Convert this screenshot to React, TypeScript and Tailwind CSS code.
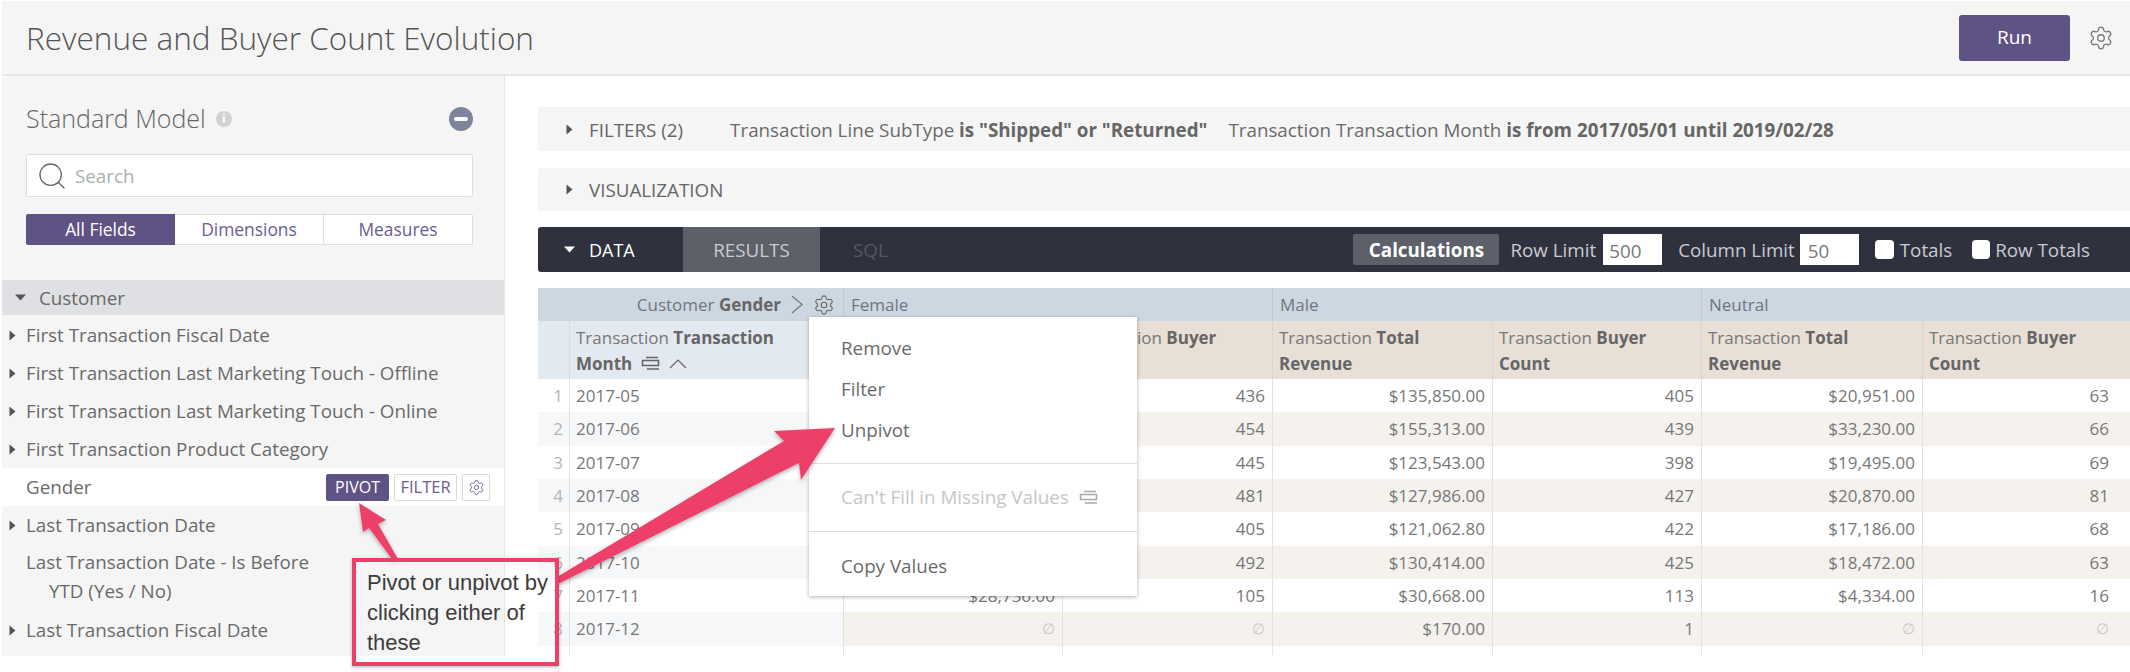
import { Settings, Search } from "lucide-react";

const font = "font-['Open_Sans',sans-serif]";

const fields = [
  "First Transaction Fiscal Date",
  "First Transaction Last Marketing Touch - Offline",
  "First Transaction Last Marketing Touch - Online",
  "First Transaction Product Category",
];

const rows = [
  ["2017-05", "", "436", "$135,850.00", "405", "$20,951.00", "63"],
  ["2017-06", "", "454", "$155,313.00", "439", "$33,230.00", "66"],
  ["2017-07", "", "445", "$123,543.00", "398", "$19,495.00", "69"],
  ["2017-08", "", "481", "$127,986.00", "427", "$20,870.00", "81"],
  ["2017-09", "", "405", "$121,062.80", "422", "$17,186.00", "68"],
  ["2017-10", "", "492", "$130,414.00", "425", "$18,472.00", "63"],
  ["2017-11", "$28,736.00", "105", "$30,668.00", "113", "$4,334.00", "16"],
  ["2017-12", "∅", "∅", "$170.00", "1", "∅", "∅"],
  ["", "", "", "", "", "", ""],
];

const cols = "grid grid-cols-[31px_274px_219px_210px_220px_209px_221px_208px]";

function TriRight() {
  return (
    <svg width="7" height="11" viewBox="0 0 7 11" className="shrink-0 text-[#555]">
      <path d="M0.5 0.5 L6.5 5.5 L0.5 10.5 Z" fill="currentColor" />
    </svg>
  );
}

function TriDown({ color = "#555" }: { color?: string }) {
  return (
    <svg width="11" height="7" viewBox="0 0 11 7" className="shrink-0">
      <path d="M0 0.5 L11 0.5 L5.5 6.5 Z" fill={color} />
    </svg>
  );
}

function FillIcon({ color = "#666" }: { color?: string }) {
  return (
    <svg width="20" height="16" viewBox="0 0 20 16" fill="none" stroke={color} strokeWidth="1.5" className="inline-block align-[-2px]">
      <path d="M5 1.5 H17" />
      <rect x="1.5" y="4.5" width="16" height="5" />
      <path d="M6 13 H18" />
    </svg>
  );
}

function FieldRow({ label, arrow }: { label: string; arrow?: boolean }) {
  return (
    <div className="h-[38px] flex items-center">
      <div className="w-[24px] pl-[7px]">{arrow && <TriRight />}</div>
      <span>{label}</span>
    </div>
  );
}

function ColHead({ a, b }: { a?: string; b?: string }) {
  const [first, second] = (b ?? "").split(" ");
  return (
    <div className="bg-[#e8dfd6] border-l border-[#dcd5cc] px-[6px] pt-[4px] leading-[26px] text-[#777]">
      {a} <b className="font-bold text-[#666]">{first}</b>
      <br />
      <b className="font-bold text-[#666]">{second}</b>
    </div>
  );
}

export default function App() {
  return (
    <div className={`${font} relative w-[2130px] h-[672px] overflow-hidden bg-white text-[#6a6a6a]`}>
      {/* top bar */}
      <header className="mt-px ml-[2px] h-[75px] bg-[#f5f5f5] border-b-2 border-[#e8e8e8] flex items-center pl-[24px] pr-[16px]">
        <h1 className="font-light text-[31.5px] text-[#555] flex-1">Revenue and Buyer Count Evolution</h1>
        <button className="w-[111px] h-[46px] rounded-[3px] bg-[#5f5285] text-white text-[19px]">Run</button>
        <Settings className="ml-[18px] w-[26px] h-[26px] text-[#777]" strokeWidth={1.2} />
      </header>

      <div className="flex">
        {/* field picker */}
        <aside className="ml-[2px] w-[503px] h-[580px] bg-[#f5f5f5] border-r border-[#e6e6e6] text-[18.8px]">
          <div className="pl-[24px] pr-[31px] pt-[26px]">
            <div className="flex items-center h-[34px]">
              <span className="font-light text-[25px] text-[#666]">Standard Model</span>
              <span className="ml-[10px] w-[16px] h-[16px] rounded-full bg-[#d2d2d2] text-white text-[12px] font-bold leading-[16px] text-center">i</span>
              <span className="ml-auto w-[24px] h-[24px] rounded-full bg-[#7d849b] flex items-center justify-center">
                <span className="w-[14px] h-[4px] bg-white rounded-sm" />
              </span>
            </div>
            <div className="mt-[18px] h-[43px] bg-white border border-[#dedede] rounded-[2px] flex items-center pl-[9px]">
              <Search className="w-[32px] h-[32px] text-[#666]" strokeWidth={1} />
              <span className="ml-[7px] pt-[2px] text-[#a9b0b0]">Search</span>
            </div>
            <div className="mt-[17px] h-[31px] grid grid-cols-3 text-[17.4px] text-[#6b5c94]">
              <div className="bg-[#5f5285] text-white flex items-center justify-center rounded-l-[2px]">All Fields</div>
              <div className="bg-white border-y border-r border-[#dedede] flex items-center justify-center">Dimensions</div>
              <div className="bg-white border-y border-r border-[#dedede] flex items-center justify-center rounded-r-[2px]">Measures</div>
            </div>
          </div>
          <div className="mt-[35px] h-[35px] bg-[#dfe0e3] flex items-center pl-[13px]">
            <TriDown />
            <span className="ml-[13px] pt-[2px]">Customer</span>
          </div>
          <div className="mt-px">
            {fields.map((f) => (
              <FieldRow key={f} label={f} arrow />
            ))}
            <div className="h-[38px] bg-white flex items-center pl-[24px] pr-[14px]">
              <span className="flex-1">Gender</span>
              <span className="w-[63px] h-[27px] rounded-[2px] bg-[#5f5285] text-white text-[16px] flex items-center justify-center">PIVOT</span>
              <span className="ml-[5px] w-[63px] h-[27px] rounded-[2px] bg-white border border-[#d8d8d8] text-[#6b5c94] text-[16.5px] flex items-center justify-center">FILTER</span>
              <span className="ml-[5px] w-[28px] h-[27px] rounded-[2px] bg-white border border-[#d8d8d8] flex items-center justify-center">
                <Settings className="w-[17px] h-[17px] text-[#6b5c94]" strokeWidth={1.3} />
              </span>
            </div>
            <FieldRow label="Last Transaction Date" arrow />
            <div className="h-[67px] pl-[24px] pt-[4px] leading-[29px]">
              <div>Last Transaction Date - Is Before</div>
              <div className="pl-[23px]">YTD (Yes / No)</div>
            </div>
            <FieldRow label="Last Transaction Fiscal Date" arrow />
          </div>
        </aside>

        {/* results area */}
        <main className="flex-1 min-w-0 pl-[33px] pt-[31px] text-[18.8px]">
          <div className="h-[44px] bg-[#f5f5f5] rounded-l-[3px] flex items-center pl-[28px] whitespace-nowrap">
            <TriRight />
            <span className="ml-[16px] pt-[2px] text-[#666]">FILTERS (2)</span>
            <span className="ml-[47px] pt-[2px]">
              Transaction Line SubType <b className="font-bold text-[#666]">is "Shipped" or "Returned"</b>
            </span>
            <span className="ml-[21px] pt-[2px]">
              Transaction Transaction Month <b className="font-bold text-[#666]">is from 2017/05/01 until 2019/02/28</b>
            </span>
          </div>
          <div className="mt-[17px] h-[43px] bg-[#f5f5f5] rounded-l-[3px] flex items-center pl-[28px]">
            <TriRight />
            <span className="ml-[16px] pt-[2px] text-[#666]">VISUALIZATION</span>
          </div>
          <div className="mt-[16px] h-[45px] bg-[#2f323e] rounded-l-[3px] flex items-center text-[#c9cbd1] whitespace-nowrap">
            <div className="w-[145px] flex items-center pl-[26px] text-white">
              <TriDown color="#fff" />
              <span className="ml-[14px] pt-[2px] text-[18px]">DATA</span>
            </div>
            <div className="w-[137px] h-full pt-[2px] bg-[#5d6069] flex items-center justify-center">RESULTS</div>
            <span className="ml-[33px] pt-[2px] text-[#54575f]">SQL</span>
            <div className="ml-auto flex items-center pr-[40px]">
              <span className="w-[146px] h-[31px] pt-[2px] rounded-[2px] bg-[#5d6069] text-white font-bold flex items-center justify-center">Calculations</span>
              <span className="ml-[11px] pt-[2px]">Row Limit</span>
              <span className="ml-[7px] w-[59px] h-[31px] pt-[3px] bg-white text-[#777] pl-[6px] flex items-center">500</span>
              <span className="ml-[16px] pt-[2px]">Column Limit</span>
              <span className="ml-[5px] w-[59px] h-[31px] pt-[3px] bg-white text-[#777] pl-[8px] flex items-center">50</span>
              <span className="ml-[16px] w-[19px] h-[19px] rounded-[4px] bg-white" />
              <span className="ml-[6px] pt-[2px]">Totals</span>
              <span className="ml-[20px] w-[18px] h-[19px] rounded-[4px] bg-white" />
              <span className="ml-[5px] pt-[2px]">Row Totals</span>
            </div>
          </div>

          <div className="mt-[16px] h-[367px] overflow-hidden text-[17px] whitespace-nowrap">
            <div className={`${cols} h-[33px] bg-[#ccd7e2] text-[#6f7680] leading-[33px]`}>
              <div className="col-span-2 flex items-center justify-end pr-[8px]">
                Customer&nbsp;<b className="font-bold text-[#666]">Gender</b>
                <svg width="12" height="19" viewBox="0 0 12 19" fill="none" stroke="#777" strokeWidth="1.2" className="ml-[10px]">
                  <path d="M1 1 L11 9.5 L1 18" />
                </svg>
                <Settings className="ml-[10px] w-[22px] h-[22px] text-[#666]" strokeWidth={1.2} />
              </div>
              <div className="col-span-2 border-l border-[#bcc7d2] pl-[7px]">Female</div>
              <div className="col-span-2 border-l border-[#bcc7d2] pl-[7px]">Male</div>
              <div className="col-span-2 border-l border-[#bcc7d2] pl-[7px]">Neutral</div>
            </div>
            <div className={`${cols} h-[58px]`}>
              <div className="bg-[#e3e9f0]" />
              <div className="bg-[#e3e9f0] border-l border-[#d5dbe2] px-[6px] pt-[4px] leading-[26px] text-[#777]">
                Transaction <b className="font-bold text-[#666]">Transaction</b>
                <br />
                <b className="font-bold text-[#666]">Month</b>
                <span className="ml-[9px]"><FillIcon /></span>
                <svg width="18" height="10" viewBox="0 0 18 10" fill="none" stroke="#666" strokeWidth="1.2" className="inline-block ml-[8px] align-[1px]">
                  <path d="M1 9 L9 1 L17 9" />
                </svg>
              </div>
              <ColHead />
              <ColHead a="Transaction" b="Buyer Count" />
              <ColHead a="Transaction" b="Total Revenue" />
              <ColHead a="Transaction" b="Buyer Count" />
              <ColHead a="Transaction" b="Total Revenue" />
              <ColHead a="Transaction" b="Buyer Count" />
            </div>
            {rows.map((row, i) => (
              <div key={i} className={`${cols} h-[33.33px] leading-[33px] text-[#777]`}>
                <div className={`pr-[6px] text-right text-[#b5b5b5] ${i % 2 ? "bg-[#f6f7f9]" : ""}`}>{i < 8 ? i + 1 : ""}</div>
                <div className={`pl-[6px] border-l border-[#e2e2e2] ${i % 2 ? "bg-[#f6f7f9]" : ""}`}>{row[0]}</div>
                {row.slice(1).map((v, j) => (
                  <div
                    key={j}
                    className={`text-right border-l border-[#e2e2e2] ${j === 5 ? "pr-[21px]" : "pr-[7px]"} ${i % 2 ? "bg-[#f5f2ee]" : ""} ${v === "∅" ? "text-[#c9c9c9] text-[15px]" : ""}`}
                  >
                    {v}
                  </div>
                ))}
              </div>
            ))}
          </div>
        </main>
      </div>

      {/* pivot menu */}
      <div className="absolute left-[809px] top-[317px] w-[328px] h-[279px] bg-white shadow-[0_1px_4px_rgba(0,0,0,0.3)] text-[18.8px] text-[#6a6a6a]">
        <div className="pl-[32px] pt-[11px] leading-[41px]">
          <div>Remove</div>
          <div>Filter</div>
          <div>Unpivot</div>
        </div>
        <div className="mt-[12px] border-t border-[#e0e0e0] h-[68px] pl-[32px] flex items-center text-[#c6c6c6]">
          Can't Fill in Missing Values
          <span className="ml-[10px]"><FillIcon color="#a8a8a8" /></span>
        </div>
        <div className="border-t border-[#e0e0e0] pl-[32px] pt-[14px] leading-[41px]">Copy Values</div>
      </div>

      {/* annotation arrows */}
      <svg className="absolute inset-0 pointer-events-none" width="2130" height="672">
        <defs>
          <filter id="sh" x="-10%" y="-10%" width="120%" height="120%">
            <feDropShadow dx="0" dy="2" stdDeviation="2" floodColor="#000" floodOpacity="0.3" />
          </filter>
        </defs>
        <g fill="#ec4069" filter="url(#sh)">
          <polygon points="359,503 386,520 378,524 398,559 392,559 369,528 363,532" />
          <polygon points="835,428 774,431 784,441 557,577 558,584 799,463 801,480" />
        </g>
      </svg>

      {/* annotation box */}
      <div className="absolute left-[352px] top-[558px] w-[207px] h-[108px] border-[4px] border-[#ec4069] shadow-[0_1px_3px_rgba(0,0,0,0.3)] pl-[11px] pt-[6px] font-['Liberation_Sans',sans-serif] text-[22px] leading-[30px] text-[#3c3c3c]">
        Pivot or unpivot by clicking either of these
      </div>
    </div>
  );
}
